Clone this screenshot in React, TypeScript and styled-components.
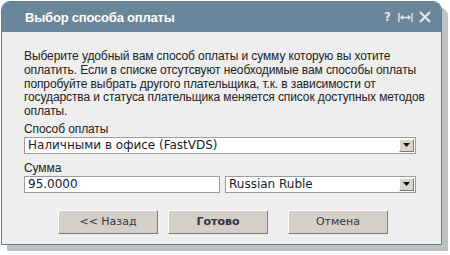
import React from "react";
import styled, { createGlobalStyle } from "styled-components";

const GlobalStyle = createGlobalStyle`
  html, body {
    margin: 0;
    padding: 0;
    background: #ffffff;
  }
  body {
    font-family: "Liberation Sans", Arial, sans-serif;
  }
`;

const Page = styled.div`
  padding: 1px 0 0 1px;
  width: 450px;
  height: 255px;
  box-sizing: border-box;
`;

const Dialog = styled.div`
  width: 441px;
  height: 244px;
  box-sizing: border-box;
  border: 1px solid #5d7c92;
  border-radius: 9px 9px 0 0;
  background: #eeeeee;
  box-shadow: 6px 6px 0 #c0c0c0;
  display: flex;
  flex-direction: column;
  overflow: hidden;
`;

const TitleBar = styled.div`
  height: 30px;
  flex-shrink: 0;
  background: #69869a;
  display: flex;
  align-items: center;
  padding: 0 10px 0 23px;
  color: #ffffff;
`;

const Title = styled.div`
  flex: 1;
  font-size: 13px;
  font-weight: bold;
  letter-spacing: -0.2px;
`;

const Tools = styled.div`
  display: flex;
  align-items: center;
  gap: 6px;
  color: #dfe6eb;
`;

const Help = styled.span`
  font-family: "DejaVu Sans", sans-serif;
  font-weight: bold;
  font-size: 12px;
  margin-right: 1px;
`;

const Body = styled.div`
  padding: 18px 24px 0 22px;
  color: #222222;
  font-size: 12px;
`;

const Intro = styled.p`
  margin: 0;
  line-height: 13.75px;
  letter-spacing: -0.1px;
  white-space: nowrap;
`;

const Label = styled.div<{ $top: number }>`
  margin-top: ${(p) => p.$top}px;
  line-height: 14px;
  height: 14px;
  letter-spacing: -0.1px;
`;

const Row = styled.div`
  display: flex;
  gap: 5px;
  margin-top: 1px;
`;

const Field = styled.div<{ $width: number }>`
  width: ${(p) => p.$width}px;
  height: 17px;
  box-sizing: border-box;
  border: 1px solid #9c9c9c;
  background: #ffffff;
  display: flex;
  align-items: center;
  padding-left: 3px;
  font-family: "DejaVu Sans", sans-serif;
  font-size: 12px;
  color: #1a1a2a;
  flex-shrink: 0;
`;

const FieldText = styled.span`
  flex: 1;
  white-space: nowrap;
  overflow: hidden;
`;

const Arrow = styled.div`
  width: 15px;
  height: 13px;
  margin-right: 1px;
  box-sizing: border-box;
  background: #d8d5cf;
  border: 1px solid;
  border-color: #ffffff #7a7a7a #7a7a7a #ffffff;
  display: flex;
  align-items: center;
  justify-content: center;
`;

const Buttons = styled.div`
  display: flex;
  margin-top: 17px;
  padding-left: 34px;
`;

const Button = styled.div<{ $bold?: boolean; $gap: number }>`
  width: 100px;
  height: 24px;
  box-sizing: border-box;
  margin-left: ${(p) => p.$gap}px;
  background: #d4d0c8;
  border: 1px solid;
  border-color: #ffffff #7d7d7d #7d7d7d #ffffff;
  display: flex;
  align-items: center;
  justify-content: center;
  font-family: "DejaVu Sans", sans-serif;
  font-size: 11px;
  font-weight: ${(p) => (p.$bold ? "bold" : "normal")};
  color: #333344;
`;

const DropArrow = () => (
  <svg width="7" height="4" viewBox="0 0 7 4">
    <path d="M0 0h7L3.5 4z" fill="#111" />
  </svg>
);

const Select = ({ width, value }: { width: number; value: string }) => (
  <Field $width={width}>
    <FieldText>{value}</FieldText>
    <Arrow>
      <DropArrow />
    </Arrow>
  </Field>
);

const introLines = [
  "Выберите удобный вам способ оплаты и сумму которую вы хотите",
  "оплатить. Если в списке отсутсвуют необходимые вам способы оплаты",
  "попробуйте выбрать другого плательщика, т.к. в зависимости от",
  "государства и статуса плательщика меняется список доступных методов",
  "оплаты.",
];

export default function App() {
  return (
    <>
      <GlobalStyle />
      <Page>
        <Dialog>
          <TitleBar>
            <Title>Выбор способа оплаты</Title>
            <Tools>
              <Help>?</Help>
              <svg width="15" height="11" viewBox="0 0 15 11">
                <path
                  d="M1 1v9M14 1v9M3 5.5h9M5 3.5l-2 2 2 2M10 3.5l2 2-2 2"
                  stroke="#dfe6eb"
                  strokeWidth="1.4"
                  fill="none"
                />
              </svg>
              <svg width="12" height="12" viewBox="0 0 12 12">
                <path d="M1 1l10 10M11 1L1 11" stroke="#e6ebef" strokeWidth="2" />
              </svg>
            </Tools>
          </TitleBar>
          <Body>
            <Intro>
              {introLines.map((line, i) => (
                <React.Fragment key={i}>
                  {line}
                  {i < introLines.length - 1 && <br />}
                </React.Fragment>
              ))}
            </Intro>
            <Label $top={3}>Способ оплаты</Label>
            <Row>
              <Select width={392} value="Наличными в офисе (FastVDS)" />
            </Row>
            <Label $top={7}>Сумма</Label>
            <Row>
              <Field $width={196}>
                <FieldText>95.0000</FieldText>
              </Field>
              <Select width={191} value="Russian Ruble" />
            </Row>
            <Buttons>
              <Button $gap={0}>&lt;&lt; Назад</Button>
              <Button $gap={10} $bold>
                Готово
              </Button>
              <Button $gap={20}>Отмена</Button>
            </Buttons>
          </Body>
        </Dialog>
      </Page>
    </>
  );
}
